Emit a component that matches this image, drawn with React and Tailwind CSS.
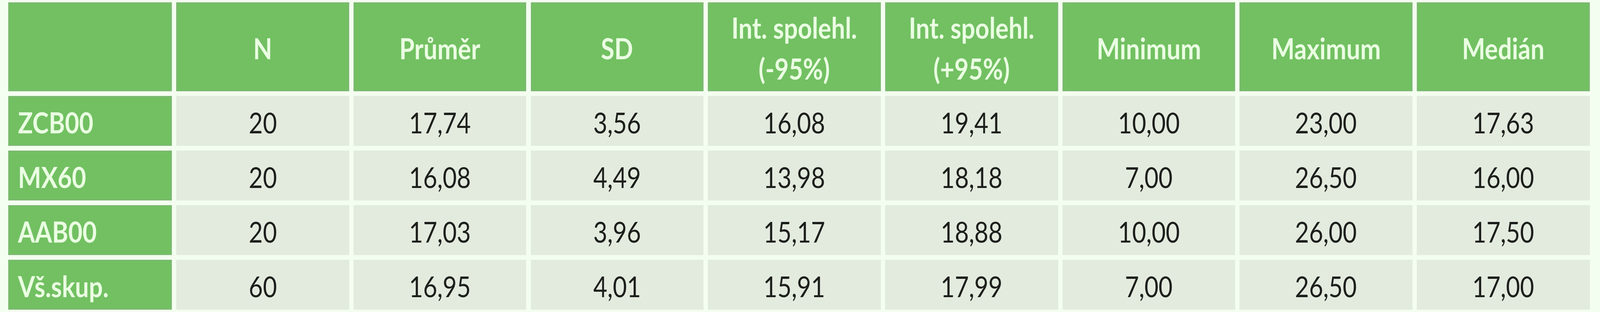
import React from "react";

const headers = [
  "",
  "N",
  "Průměr",
  "SD",
  "Int. spolehl.\n(-95%)",
  "Int. spolehl.\n(+95%)",
  "Minimum",
  "Maximum",
  "Medián",
];

const rows = [
  ["ZCB00", "20", "17,74", "3,56", "16,08", "19,41", "10,00", "23,00", "17,63"],
  ["MX60", "20", "16,08", "4,49", "13,98", "18,18", "7,00", "26,50", "16,00"],
  ["AAB00", "20", "17,03", "3,96", "15,17", "18,88", "10,00", "26,00", "17,50"],
  ["Vš.skup.", "60", "16,95", "4,01", "15,91", "17,99", "7,00", "26,50", "17,00"],
];

const App = () => {
  return (
    <div
      className="w-full h-screen bg-[#f4fef0] pt-[0.75vh] pl-[0.52%] pr-[0.644%] overflow-hidden"
      style={{ fontFamily: "Lato, 'Open Sans', sans-serif" }}
    >
      <div className="w-full grid grid-cols-[492fr_repeat(8,520fr)] grid-rows-[28.5vh_repeat(4,16vh)] gap-x-[0.273%] gap-y-[1.5vh]">
        {headers.map((h, i) => (
          <div
            key={"h" + i}
            className="bg-[#72c062] shadow-[inset_0_0_0_3px_#7db873] flex items-center justify-center text-center font-bold text-[9.25vh] leading-[13.1vh] text-[#eafde2] pt-[1vh]"
          >
            <span className="inline-block whitespace-pre-line scale-x-[0.85]">{h}</span>
          </div>
        ))}
        {rows.map((row, r) =>
          row.map((cell, c) =>
            c === 0 ? (
              <div
                key={r + "-" + c}
                className="bg-[#72c062] shadow-[inset_0_0_0_3px_#7db873] flex items-center pl-[5.9%] font-bold text-[9.25vh] leading-none text-[#eafde2] pt-[1vh] whitespace-nowrap"
              >
                <span className="inline-block origin-left scale-x-[0.85]">{cell}</span>
              </div>
            ) : (
              <div
                key={r + "-" + c}
                className="bg-[#e3ebde] flex items-center justify-center text-[9.25vh] leading-none text-[#1d1f1c] pt-[1vh]"
              >
                <span className="inline-block scale-x-[0.84]">{cell}</span>
              </div>
            )
          )
        )}
      </div>
    </div>
  );
};

export default App;
